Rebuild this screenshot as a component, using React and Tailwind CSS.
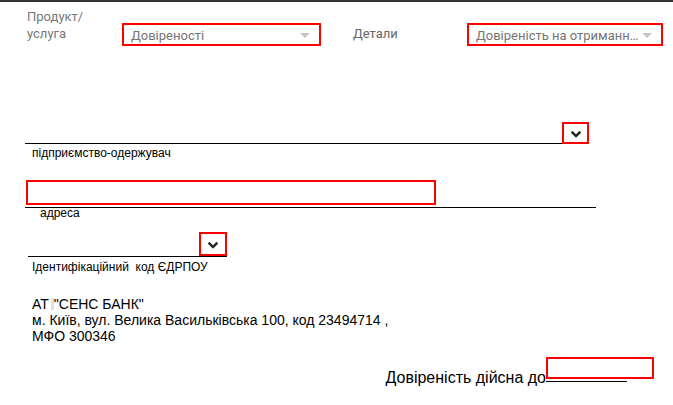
const Chevron = () => (
  <svg width="10" height="7" viewBox="0 0 10 7" className="block">
    <polyline points="1.5,1.5 5,5 8.5,1.5" fill="none" stroke="#222" strokeWidth="2.4" strokeLinecap="square" />
  </svg>
);

function SelectBox({ width, text }) {
  return (
    <div className={`${width} mt-[15px] h-[23px] border-2 border-[#ff0000] flex items-center pl-[7px] pr-[9px] pt-[2px]`}>
      <span className="flex-1 min-w-0 truncate text-[13px] leading-[17px] text-[#757575]">{text}</span>
      <span className="ml-[2px] w-0 h-0 border-l-[5px] border-r-[5px] border-t-[5px] border-l-transparent border-r-transparent border-t-[#c4c4c4]" />
    </div>
  );
}

export default function App() {
  return (
    <div className="w-[673px] h-[405px] overflow-hidden bg-white border-t-2 border-[#333]">
      <div className="flex pl-[27px] pt-[6px] font-['Roboto',sans-serif]">
        <div className="w-[95px] text-[13px] leading-[17px] text-[#777]">
          Продукт/
          <br />
          услуга
        </div>
        <SelectBox width="w-[199px]" text="Довіреності" />
        <div className="ml-[32px] w-[114px] mt-[17px] text-[13px] leading-[17px] text-[#666]">Детали</div>
        <SelectBox width="w-[196px]" text="Довіреність на отримання пенсії" />
      </div>

      <div className="font-['Liberation_Sans',Arial,sans-serif] text-black">
        <div className="flex items-end ml-[25px] mt-[76px]">
          <div className="w-[537px] h-px bg-black" />
          <div className="w-[27px] h-[22px] border-2 border-[#ff0000] flex items-center justify-center pt-[2px]">
            <Chevron />
          </div>
        </div>
        <div className="ml-[32px] mt-[2px] text-[12px] leading-[14px]">підприємство-одержувач</div>

        <div className="ml-[26px] mt-[20px] w-[410px] h-[25px] border-2 border-[#ff0000]" />
        <div className="ml-[25px] mt-[2px] w-[571px] h-px bg-black" />
        <div className="ml-[40px] mt-[-2px] text-[12px] leading-[14px]">адреса</div>

        <div className="ml-[28px] mt-[12px] w-[199px] border-b border-black flex justify-end">
          <div className="w-[28px] h-[24px] border-2 border-[#ff0000] flex items-center justify-center pt-[2px]">
            <Chevron />
          </div>
        </div>
        <div className="ml-[32px] mt-[3px] text-[12px] leading-[14px] whitespace-pre">Ідентифікаційний  код ЄДРПОУ</div>

        <div className="ml-[32px] mt-[22px] text-[14px] leading-[16px]">
          <div className="flex items-center">
            <span>АТ</span>
            <span className="ml-[2px] w-[3px] h-[12px] bg-[#e0e0e0]" />
            <span>"СЕНС БАНК"</span>
          </div>
          <div>м. Київ, вул. Велика Васильківська 100, код 23494714 ,</div>
          <div>МФО 300346</div>
        </div>

        <div className="flex justify-end items-start pr-[19px] mt-[13px]">
          <span className="mt-[12px] text-[16px] leading-[18px]">Довіреність дійсна до</span>
          <div className="w-[108px]">
            <div className="h-[22px] border-2 border-[#ff0000]" />
            <div className="w-[81px] h-px mt-[2px] bg-black" />
          </div>
        </div>
      </div>
    </div>
  );
}
